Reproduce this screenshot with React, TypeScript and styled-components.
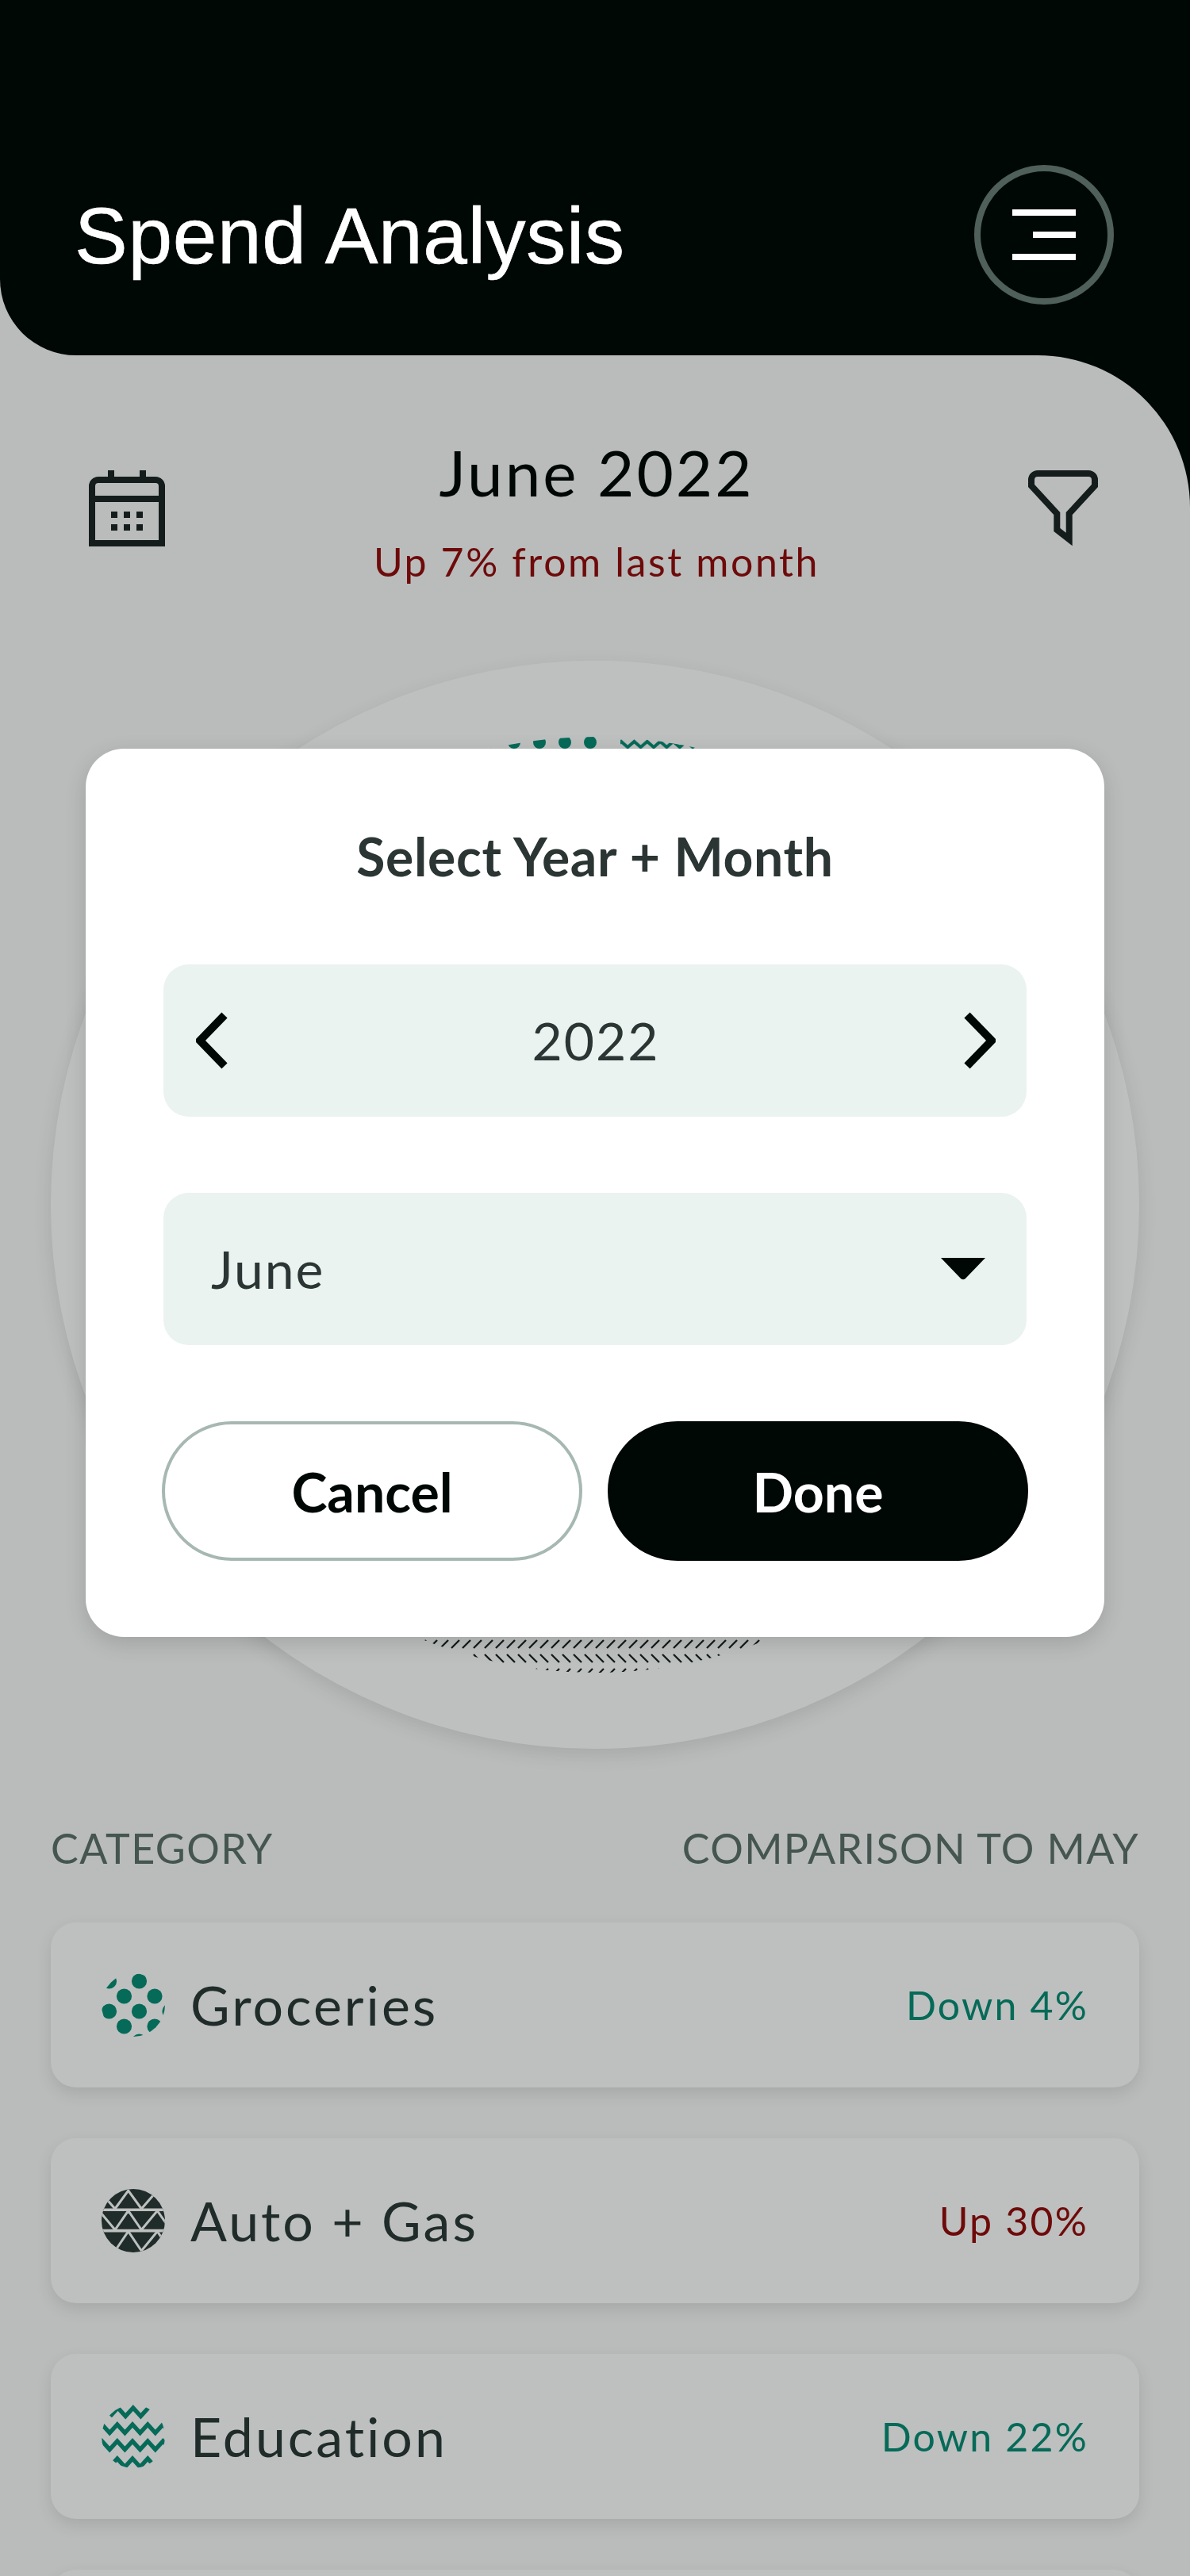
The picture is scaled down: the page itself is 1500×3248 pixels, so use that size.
import React from "react";
import styled, { createGlobalStyle } from "styled-components";

const GlobalStyle = createGlobalStyle`
  html, body {
    margin: 0;
    padding: 0;
    background: #000806;
  }
  * {
    box-sizing: border-box;
  }
`;

const bodyFont = `"Lato", "Noto Sans", sans-serif`;
const pageColor = "#f7f8f7";
const cardColor = "#fdfefd";
const green = "#098b73";
const red = "#930b0b";
const ink = "#1b2523";

const Page = styled.div`
  position: relative;
  width: 1500px;
  height: 3248px;
  overflow: hidden;
  font-family: ${bodyFont};
  background: linear-gradient(90deg, ${pageColor} 50%, #000806 50%);
`;

const Header = styled.header`
  position: relative;
  z-index: 2;
  height: 448px;
  padding: 146px 96px 0 94px;
  display: flex;
  align-items: center;
  justify-content: space-between;
  background: #000806;
  border-bottom-left-radius: 96px;
`;

const Title = styled.h1`
  margin: 0;
  font-family: "Liberation Sans", Arial, sans-serif;
  font-size: 100px;
  font-weight: 400;
  letter-spacing: 0.7px;
  -webkit-text-stroke: 0.7px #ffffff;
  color: #ffffff;
`;

const MenuButton = styled.div`
  width: 176px;
  height: 176px;
  margin-top: -2px;
  border: 8px solid #4f5f5a;
  border-radius: 50%;
  display: flex;
  flex-direction: column;
  align-items: flex-end;
  justify-content: center;
  gap: 20px;
  padding-right: 40px;
`;

const MenuBar = styled.span<{ $width: number }>`
  display: block;
  height: 8px;
  width: ${(p) => p.$width}px;
  background: #ffffff;
`;

const Main = styled.main`
  background: ${pageColor};
  border-top-right-radius: 192px;
  padding: 93px 64px 0;
  height: 2800px;
`;

const SummaryRow = styled.section`
  display: flex;
  align-items: center;
  justify-content: space-between;
  padding: 0 52px 0 48px;
`;

const MonthBlock = styled.div`
  text-align: center;
`;

const MonthTitle = styled.div`
  font-size: 80px;
  line-height: 108px;
  font-weight: 400;
  letter-spacing: 3px;
  color: #000806;
`;

const MonthDelta = styled.div`
  margin-top: 27px;
  font-size: 50px;
  line-height: 64px;
  font-weight: 400;
  letter-spacing: 2.6px;
  color: ${red};
`;

const ChartCircle = styled.div`
  width: 1372px;
  height: 1372px;
  margin-top: 93px;
  border-radius: 50%;
  background: ${cardColor};
  box-shadow: 0 8px 24px rgba(0, 8, 6, 0.1);
  display: flex;
  align-items: center;
  justify-content: center;
`;

const LabelRow = styled.div`
  margin-top: 93px;
  display: flex;
  justify-content: space-between;
`;

const Label = styled.span`
  font-size: 52px;
  line-height: 64px;
  letter-spacing: 1.4px;
  color: #5c6f69;
`;

const CategoryList = styled.div`
  margin-top: 62px;
  display: flex;
  flex-direction: column;
  gap: 64px;
`;

const CategoryCard = styled.div`
  height: 208px;
  flex-shrink: 0;
  padding: 0 64px;
  display: flex;
  align-items: center;
  border-radius: 32px;
  background: ${cardColor};
  box-shadow: 0 8px 20px rgba(0, 8, 6, 0.1);
`;

const CategoryName = styled.span`
  margin-left: 32px;
  margin-top: -2px;
  flex: 1;
  font-size: 68px;
  font-weight: 400;
  letter-spacing: 3px;
  color: #2b3835;
`;

const Delta = styled.span<{ $up?: boolean }>`
  font-size: 50px;
  letter-spacing: 2.2px;
  color: ${(p) => (p.$up ? red : green)};
`;

const Overlay = styled.div`
  position: absolute;
  inset: 0;
  z-index: 1;
  padding-top: 944px;
  display: flex;
  justify-content: center;
  align-items: flex-start;
  background: rgba(0, 8, 6, 0.25);
`;

const Modal = styled.div`
  width: 1284px;
  height: 1120px;
  padding: 96px 96px 0;
  border-radius: 48px;
  background: #ffffff;
  box-shadow: 0 8px 28px rgba(0, 8, 6, 0.14);
`;

const ModalTitle = styled.h2`
  margin: 0 0 96px;
  text-align: center;
  font-size: 66px;
  line-height: 80px;
  font-weight: 700;
  letter-spacing: 0.7px;
  color: #2b3533;
`;

const PickerBox = styled.div`
  height: 192px;
  margin: 0 2px 96px;
  border-radius: 32px;
  background: #eaf3f0;
  display: flex;
  align-items: center;
  justify-content: space-between;
`;

const YearBox = styled(PickerBox)`
  padding: 0 39px 0 41px;
`;

const MonthBox = styled(PickerBox)`
  padding: 0 52px 0 60px;
`;

const PickerValue = styled.span`
  margin-top: -2px;
  font-size: 66px;
  font-weight: 400;
  letter-spacing: 2px;
  color: #2b3533;
`;

const ButtonRow = styled.div`
  display: flex;
  gap: 32px;
`;

const ActionButton = styled.div<{ $primary?: boolean }>`
  flex: 1;
  height: 176px;
  display: flex;
  align-items: center;
  justify-content: center;
  border-radius: 88px;
  font-size: 68px;
  font-weight: 700;
  color: ${(p) => (p.$primary ? "#ffffff" : "#000806")};
  background: ${(p) => (p.$primary ? "#000806" : "#ffffff")};
  border: 4px solid ${(p) => (p.$primary ? "#000806" : "#a7b8b3")};
`;

const CalendarIcon = () => (
  <svg width="96" height="96" viewBox="0 0 96 96" fill="none">
    <path d="M24 0h8v10h-8zM64 0h8v10h-8z" fill={ink} />
    <path d="M4 92V20a8 8 0 0 1 8-8h72a8 8 0 0 1 8 8v72z" stroke={ink} strokeWidth="8" />
    <path d="M4 36h88" stroke={ink} strokeWidth="8" />
    <path d="M28 52h8v8h-8zM44 52h8v8h-8zM60 52h8v8h-8zM28 68h8v8h-8zM44 68h8v8h-8zM60 68h8v8h-8z" fill={ink} />
  </svg>
);

const FilterIcon = () => (
  <svg width="88" height="96" viewBox="0 0 88 96" fill="none">
    <path
      d="M12 4H76a8 8 0 0 1 8 8V19.5L51.7 54.5V87L36.3 75V54.5L4 19.5V12a8 8 0 0 1 8-8Z"
      stroke={ink}
      strokeWidth="8"
    />
  </svg>
);

const Chevron = ({ flip }: { flip?: boolean }) => (
  <svg width="41" height="72" viewBox="0 0 41 72" fill="none">
    <path
      d={flip ? "M5 4L36 36L5 68" : "M36 4L5 36L36 68"}
      stroke="#000806"
      strokeWidth="10"
    />
  </svg>
);

const CaretDown = () => (
  <svg width="56" height="28" viewBox="0 0 56 28">
    <path d="M0 0H56L31 26a4 4 0 0 1-6 0Z" fill="#000806" />
  </svg>
);

const ChartDisc = () => (
  <svg width="1180" height="1180" viewBox="0 0 1180 1180">
    <defs>
      <clipPath id="disc">
        <circle cx="590" cy="590" r="590" />
      </clipPath>
      <pattern id="dots" width="32" height="32" patternUnits="userSpaceOnUse">
        <circle cx="8" cy="7" r="8" fill={green} />
      </pattern>
      <pattern id="zigzag" x="8" width="16.4" height="28" patternUnits="userSpaceOnUse">
        <path d="M-1 14L8.2 6L17.4 14" fill="none" stroke={green} strokeWidth="4" />
      </pattern>
      <pattern id="hatch" width="14" height="36" patternUnits="userSpaceOnUse">
        <path d="M3 33L13 23M3 5L13 15" stroke={ink} strokeWidth="2.4" />
      </pattern>
    </defs>
    <g clipPath="url(#disc)">
      <rect x="0" y="0" width="600" height="590" fill="url(#dots)" />
      <rect x="622" y="0" width="558" height="590" fill="url(#zigzag)" />
      <rect x="0" y="590" width="1180" height="590" fill="url(#hatch)" />
    </g>
  </svg>
);

const DotsIcon = () => {
  const dots = [
    [9.5, 10], [47.5, 10], [28.5, 29], [67, 29], [9.5, 48],
    [47.5, 48], [86, 48], [28.5, 67], [67, 67], [47.5, 86],
  ];
  return (
    <svg width="80" height="80" viewBox="0 0 80 80">
      <defs>
        <clipPath id="dots-clip">
          <circle cx="40" cy="40" r="40" />
        </clipPath>
      </defs>
      <g clipPath="url(#dots-clip)">
        {dots.map(([x, y]) => (
          <circle key={`${x}-${y}`} cx={x} cy={y} r="9.6" fill={green} />
        ))}
      </g>
    </svg>
  );
};

const TrianglesIcon = () => {
  const rows = [
    [2, 25],
    [27.5, 51.5],
    [53.5, 78],
  ];
  return (
    <svg width="80" height="80" viewBox="0 0 80 80">
      <defs>
        <clipPath id="tri-clip">
          <circle cx="40" cy="40" r="40" />
        </clipPath>
      </defs>
      <g clipPath="url(#tri-clip)">
        <rect width="80" height="80" fill="#2b3835" />
        <path d="M0 26.2H80M0 52.6H80" stroke={cardColor} strokeWidth="3.6" />
        {rows.map(([top, bottom]) => (
          <path
            key={top}
            d={`M-20 ${bottom}L-3 ${top}L17 ${bottom}L33.7 ${top}L50.3 ${bottom}L70.3 ${top}L87 ${bottom}`}
            fill="none"
            stroke={cardColor}
            strokeWidth="3"
          />
        ))}
      </g>
    </svg>
  );
};

const ZigzagIcon = () => {
  const rows = [4, 25, 46, 68];
  return (
    <svg width="80" height="80" viewBox="0 0 80 80">
      <defs>
        <clipPath id="zig-clip">
          <circle cx="40" cy="40" r="40" />
        </clipPath>
      </defs>
      <g clipPath="url(#zig-clip)" fill="none" stroke={green} strokeWidth="5.4">
        {rows.map((y, i) => {
          const wide = i === 1 || i === 2;
          const from = i === 0 ? 11 : -9;
          const to = i === 0 ? 65 : wide ? 90 : 70;
          let d = "";
          for (let x = from, up = false; x <= to; x += 9.6, up = !up) {
            d += `${d ? "L" : "M"}${x} ${up ? y : y + 10.5}`;
          }
          return <path key={y} d={d} />;
        })}
      </g>
    </svg>
  );
};

const categories = [
  { name: "Groceries", delta: "Down 4%", icon: <DotsIcon /> },
  { name: "Auto + Gas", delta: "Up 30%", up: true, icon: <TrianglesIcon /> },
  { name: "Education", delta: "Down 22%", icon: <ZigzagIcon /> },
];

const App: React.FC = () => {
  return (
    <Page>
      <GlobalStyle />
      <Header>
        <Title>Spend Analysis</Title>
        <MenuButton>
          <MenuBar $width={80} />
          <MenuBar $width={54} />
          <MenuBar $width={80} />
        </MenuButton>
      </Header>

      <Main>
        <SummaryRow>
          <CalendarIcon />
          <MonthBlock>
            <MonthTitle>June 2022</MonthTitle>
            <MonthDelta>Up 7% from last month</MonthDelta>
          </MonthBlock>
          <FilterIcon />
        </SummaryRow>

        <ChartCircle>
          <ChartDisc />
        </ChartCircle>

        <LabelRow>
          <Label>CATEGORY</Label>
          <Label>COMPARISON TO MAY</Label>
        </LabelRow>

        <CategoryList>
          {categories.map((c) => (
            <CategoryCard key={c.name}>
              {c.icon}
              <CategoryName>{c.name}</CategoryName>
              <Delta $up={c.up}>{c.delta}</Delta>
            </CategoryCard>
          ))}
          <CategoryCard />
        </CategoryList>
      </Main>

      <Overlay>
        <Modal>
          <ModalTitle>Select Year + Month</ModalTitle>
          <YearBox>
            <Chevron />
            <PickerValue>2022</PickerValue>
            <Chevron flip />
          </YearBox>
          <MonthBox>
            <PickerValue>June</PickerValue>
            <CaretDown />
          </MonthBox>
          <ButtonRow>
            <ActionButton>Cancel</ActionButton>
            <ActionButton $primary>Done</ActionButton>
          </ButtonRow>
        </Modal>
      </Overlay>
    </Page>
  );
};

export default App;
